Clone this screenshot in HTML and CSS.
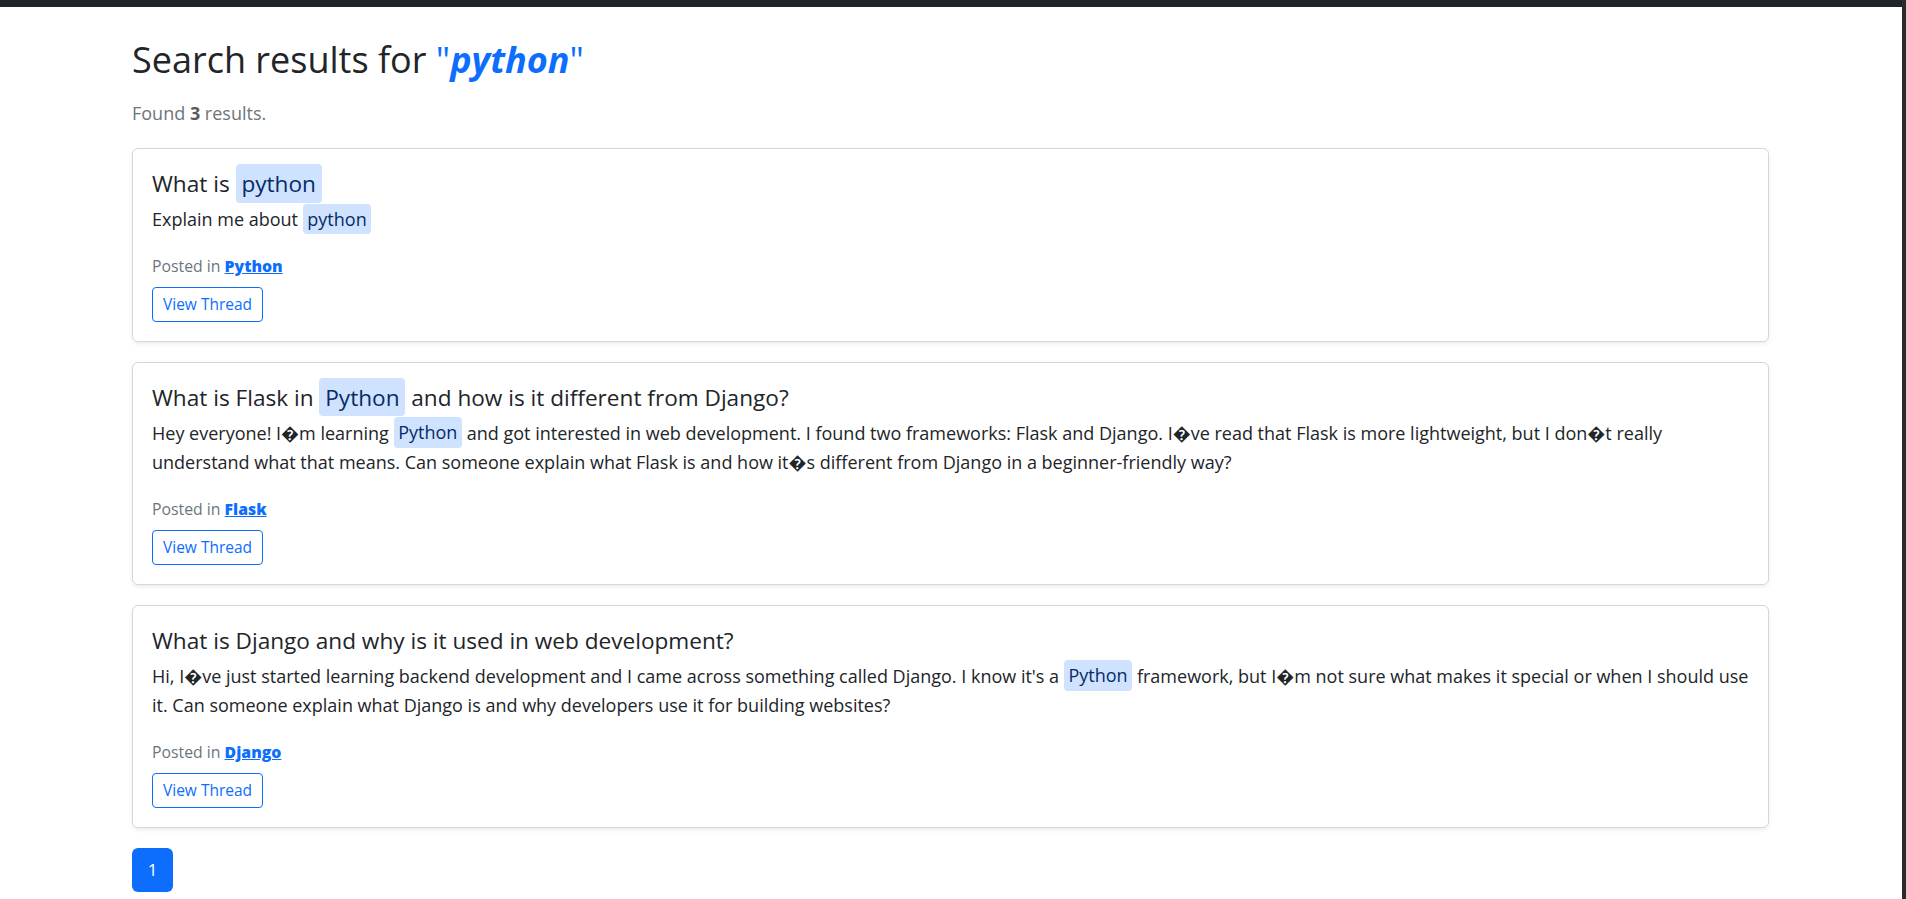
FILE: index.html
```html
<!DOCTYPE html>
<html lang="en">
<head>
<meta charset="utf-8">
<title>Search results</title>
<link rel="stylesheet" href="styles.css">
</head>
<body>
<div class="shell">
  <div class="main">
    <div class="topbar"></div>
    <div class="container">
      <h1 class="heading">Search results for <span class="query">"<strong><em>python</em></strong>"</span></h1>
      <p class="found">Found <strong>3</strong> results.</p>

      <div class="card">
        <h5 class="card-title">What is <mark>python</mark></h5>
        <p class="card-text">Explain me about <mark>python</mark></p>
        <p class="meta">Posted in <a href="#" class="cat">Python</a></p>
        <a href="#" class="btn">View Thread</a>
      </div>

      <div class="card">
        <h5 class="card-title">What is Flask in <mark>Python</mark> and how is it different from Django?</h5>
        <p class="card-text">Hey everyone! I&#xFFFD;m learning <mark>Python</mark> and got interested in web development. I found two frameworks: Flask and Django. I&#xFFFD;ve read that Flask is more lightweight, but I don&#xFFFD;t really understand what that means. Can someone explain what Flask is and how it&#xFFFD;s different from Django in a beginner-friendly way?</p>
        <p class="meta">Posted in <a href="#" class="cat">Flask</a></p>
        <a href="#" class="btn">View Thread</a>
      </div>

      <div class="card">
        <h5 class="card-title">What is Django and why is it used in web development?</h5>
        <p class="card-text">Hi, I&#xFFFD;ve just started learning backend development and I came across something called Django. I know it's a <mark>Python</mark> framework, but I&#xFFFD;m not sure what makes it special or when I should use it. Can someone explain what Django is and why developers use it for building websites?</p>
        <p class="meta">Posted in <a href="#" class="cat">Django</a></p>
        <a href="#" class="btn">View Thread</a>
      </div>

      <nav class="pagination">
        <a href="#" class="page-link active">1</a>
      </nav>
    </div>
  </div>
  <div class="scrollbar"></div>
</div>
</body>
</html>
```
FILE: styles.css
```css
* { box-sizing: border-box; }
html, body { margin: 0; padding: 0; height: 100%; }
body {
  font-family: "Open Sans", "Noto Sans", "DejaVu Sans", sans-serif;
  color: #212529;
  background: #fff;
  overflow: hidden;
}
.shell { display: flex; height: 100%; }
.main { flex: 1; min-width: 0; }
.scrollbar { width: 4px; background: #2b2b2b; }
.topbar { height: 7px; background: #212529; }
.container { padding: 0 133px 0 132px; }
.heading {
  font-size: 36px;
  font-weight: 400;
  line-height: 48px;
  margin: 29px 0 16px;
}
.query { color: #0d6efd; }
.query strong { font-weight: 700; }
.found {
  font-size: 18px;
  line-height: 26px;
  color: #6c757d;
  margin: 0 0 22px;
}
.found strong { font-weight: 700; color: #555b61; }
.card {
  border: 1px solid #d5d6d7;
  border-radius: 6px;
  box-shadow: 0 2px 4px rgba(0,0,0,0.075);
  padding: 20px 19px 19px;
  margin-bottom: 20px;
  display: flex;
  flex-direction: column;
  align-items: flex-start;
}
.card-title {
  font-size: 22.6px;
  font-weight: 400;
  line-height: 29px;
  margin: 0 0 7px;
}
.card-text {
  font-size: 18px;
  line-height: 29.5px;
  margin: 0 0 19px;
}
mark {
  background: #cfe2ff;
  color: #052c65;
  padding: 0.17em 0.26em;
  border-radius: 4px;
}
.meta {
  font-size: 15.8px;
  line-height: 24px;
  color: #6c757d;
  margin: 0 0 9px;
}
.cat {
  color: #0d6efd;
  font-weight: 800;
  text-decoration: underline;
}
.btn {
  display: inline-block;
  font-size: 15.5px;
  line-height: 23px;
  padding: 5px 10px;
  color: #0d6efd;
  border: 1px solid #0d6efd;
  border-radius: 4px;
  text-decoration: none;
}
.pagination { display: flex; }
.page-link {
  display: flex;
  align-items: center;
  justify-content: center;
  width: 41px;
  height: 44px;
  background: #0d6efd;
  color: #fff;
  font-size: 17px;
  border-radius: 6px;
  text-decoration: none;
}
```
